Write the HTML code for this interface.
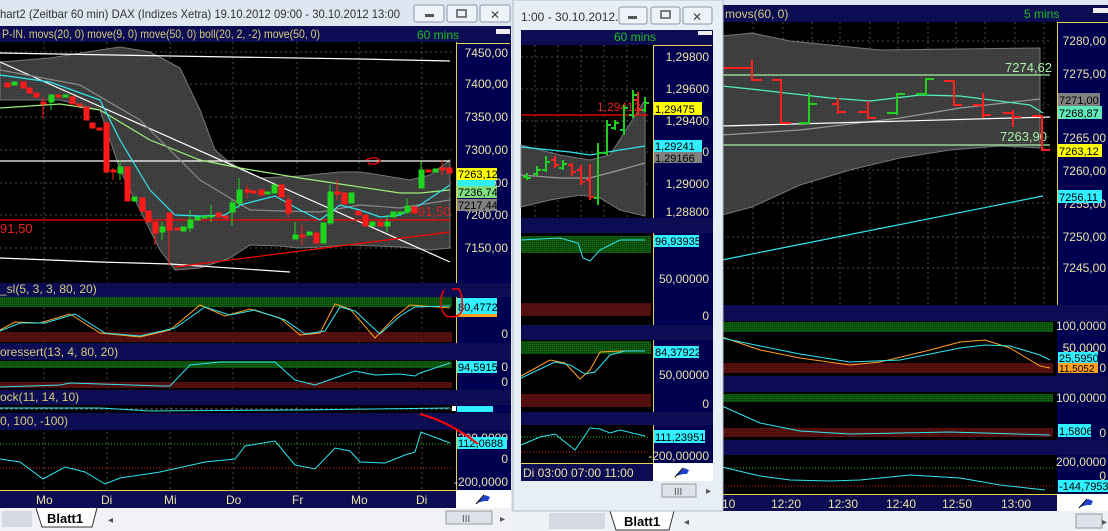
<!DOCTYPE html>
<html><head><meta charset="utf-8"><style>
html,body{margin:0;padding:0;background:#c8d4e4;overflow:hidden}
svg{display:block}
text{font-family:"Liberation Sans",sans-serif}
.ax{fill:#ece2a4;font-size:12px;text-anchor:end}
.hd{fill:#d6cc7a;font-size:12px}
.g{stroke:#4a4a4a;stroke-width:1;stroke-dasharray:2 3}
.tm{fill:#ece2a4;font-size:12px}
.tg{font-size:11px;fill:#000}
</style></head><body>
<svg width="1108" height="531" viewBox="0 0 1108 531" xmlns="http://www.w3.org/2000/svg">
<defs>
<pattern id="gr" width="2" height="2" patternUnits="userSpaceOnUse"><rect width="2" height="2" fill="#0a4a0a"/><rect width="1" height="1" fill="#147014"/></pattern>
<pattern id="rd" width="2" height="2" patternUnits="userSpaceOnUse"><rect width="2" height="2" fill="#4a0c0c"/><rect width="1" height="1" fill="#6a1414"/></pattern>
<pattern id="gy" width="2" height="2" patternUnits="userSpaceOnUse"><rect width="2" height="2" fill="#3a3a3a"/><rect width="1" height="1" fill="#4a4a4a"/></pattern>
<pattern id="nv" width="2" height="2" patternUnits="userSpaceOnUse"><rect width="2" height="2" fill="#0a0a50"/><rect width="1" height="1" fill="#14145e"/></pattern>
</defs>

<!-- ================= LEFT WINDOW ================= -->
<rect x="0" y="0" width="516" height="531" fill="#dfe7f2"/>
<rect x="0" y="0" width="516" height="25" fill="#dde6f1"/>
<text x="0" y="18" font-size="12" fill="#333" textLength="400" lengthAdjust="spacingAndGlyphs">hart2 (Zeitbar 60 min)  DAX (Indizes Xetra) 19.10.2012 09:00 - 30.10.2012 13:00</text>
<g fill="#eef3f9" stroke="#8a97a8"><rect x="414" y="5" width="30" height="17" rx="2"/><rect x="447" y="5" width="30" height="17" rx="2"/><rect x="480" y="5" width="30" height="17" rx="2"/></g>
<rect x="425" y="14" width="9" height="3" fill="#555"/>
<rect x="457" y="10" width="9" height="7" fill="none" stroke="#555" stroke-width="1.5"/>
<text x="495" y="19" font-size="12" fill="#444" text-anchor="middle">✕</text>

<rect x="0" y="26" width="511" height="464" fill="#000"/>
<rect x="0" y="26" width="511" height="16" fill="url(#nv)"/>
<text x="2" y="38" class="hd" textLength="318" lengthAdjust="spacingAndGlyphs">P-IN. movs(20, 0) move(9, 0) move(50, 0) boll(20, 2, -2) move(50, 0)</text>
<text x="417" y="39" font-size="12" fill="#20c020">60 mins</text>
<rect x="496" y="29" width="14" height="5" fill="#eee"/>
<rect x="456" y="42" width="55" height="241" fill="#000050"/>
<line x1="456.5" y1="42" x2="456.5" y2="283" stroke="#e8d050"/><line x1="456" y1="43.5" x2="510" y2="43.5" stroke="#e8d050"/>
<g class="ax"><text x="508" y="57">7450,00</text><text x="508" y="88">7400,00</text><text x="508" y="121">7350,00</text><text x="508" y="154">7300,00</text><text x="508" y="187">7250,00</text><text x="508" y="219">7200,00</text><text x="508" y="252">7150,00</text></g>
<g class="g"><line x1="44" y1="42" x2="44" y2="490"/><line x1="107" y1="42" x2="107" y2="490"/><line x1="170" y1="42" x2="170" y2="490"/><line x1="233" y1="42" x2="233" y2="490"/><line x1="297" y1="42" x2="297" y2="490"/><line x1="359" y1="42" x2="359" y2="490"/><line x1="422" y1="42" x2="422" y2="490"/>
<line x1="0" y1="52" x2="452" y2="52"/><line x1="0" y1="84" x2="452" y2="84"/><line x1="0" y1="117" x2="452" y2="117"/><line x1="0" y1="150" x2="452" y2="150"/><line x1="0" y1="183" x2="452" y2="183"/><line x1="0" y1="215" x2="452" y2="215"/><line x1="0" y1="248" x2="452" y2="248"/></g>
<polygon fill="url(#gy)" stroke="#777" points="0,62 50,58 100,50 120,47 150,52 180,68 200,110 215,150 230,163 260,178 300,176 340,172 360,172 380,175 410,180 430,175 450,160 450,248 430,250 400,247 350,245 320,247 300,248 280,246 250,245 230,258 200,268 175,270 160,250 140,210 120,170 100,110 60,100 0,100"/>
<g fill="none" stroke-width="1.2">
<polyline stroke="#fff" points="0,53 170,56 360,59 450,61"/>
<line x1="0" y1="161" x2="450" y2="161" stroke="#fff"/>
<polyline stroke="#fff" points="0,62 450,262"/>
<polyline stroke="#fff" points="0,258 100,262 170,264 290,272"/>
<line x1="0" y1="220" x2="450" y2="220" stroke="#f00"/>
<polyline stroke="#f00" points="175,267 450,232"/>
<polyline stroke="#9ef07a" points="0,108 60,104 100,110 150,140 200,160 240,168 300,178 340,184 400,193 420,193 450,190"/>
<polyline stroke="#8a8a8a" points="0,70 80,85 140,120 200,180 250,210 320,212 360,205 400,208 450,200"/>
<polyline stroke="#2ee6f0" points="0,75 50,82 100,100 120,140 150,190 175,215 200,216 225,215 240,205 275,196 300,210 320,220 340,205 360,210 380,217 400,215 420,205 450,185"/>
</g>
<g stroke-width="1">
<g fill="#ff1a1a" stroke="#ff1a1a">
<rect x="5" y="83" width="5" height="4"/><rect x="21" y="82" width="5" height="6"/><rect x="27" y="88" width="5" height="5"/><rect x="34" y="93" width="5" height="4"/><line x1="43" y1="97" x2="43" y2="118"/><rect x="41" y="102" width="5" height="2"/><rect x="56" y="95" width="5" height="2"/><rect x="70" y="97" width="5" height="7"/><rect x="77" y="104" width="5" height="2"/><rect x="84" y="107" width="5" height="13"/><rect x="90" y="123" width="5" height="5"/><rect x="97" y="128" width="5" height="2"/><rect x="104" y="123" width="5" height="49"/><line x1="113" y1="168" x2="113" y2="180"/><rect x="111" y="170" width="5" height="2"/><rect x="125" y="167" width="5" height="34"/><rect x="140" y="198" width="5" height="13"/><rect x="146" y="211" width="5" height="11"/><line x1="155" y1="222" x2="155" y2="245"/><rect x="153" y="222" width="5" height="11"/><line x1="169" y1="213" x2="169" y2="266"/><rect x="167" y="213" width="5" height="17"/><rect x="175" y="228" width="5" height="2"/><rect x="216" y="213" width="5" height="4"/><rect x="223" y="216" width="5" height="2"/><rect x="245" y="190" width="5" height="2"/><line x1="247" y1="185" x2="247" y2="198"/><rect x="251" y="191" width="5" height="2"/><rect x="259" y="190" width="5" height="5"/><rect x="279" y="185" width="5" height="12"/><rect x="286" y="200" width="5" height="13"/><line x1="288" y1="195" x2="288" y2="218"/><rect x="300" y="235" width="5" height="2"/><line x1="302" y1="225" x2="302" y2="245"/><rect x="314" y="233" width="5" height="10"/><rect x="335" y="192" width="5" height="2"/><line x1="337" y1="180" x2="337" y2="200"/><rect x="342" y="193" width="5" height="11"/><rect x="356" y="211" width="5" height="4"/><rect x="363" y="215" width="5" height="11"/><rect x="378" y="222" width="5" height="4"/><rect x="412" y="207" width="5" height="6"/><rect x="426" y="170" width="5" height="2"/><rect x="440" y="168" width="5" height="2"/><line x1="442" y1="160" x2="442" y2="175"/><rect x="447" y="168" width="5" height="5"/>
</g>
<g fill="#1ed61e" stroke="#1ed61e">
<rect x="12" y="82" width="5" height="3"/><rect x="49" y="95" width="5" height="7"/><line x1="51" y1="95" x2="51" y2="110"/><rect x="63" y="95" width="5" height="2"/><rect x="118" y="167" width="5" height="6"/><line x1="120" y1="160" x2="120" y2="180"/><rect x="132" y="197" width="5" height="4"/><rect x="160" y="227" width="5" height="5"/><line x1="162" y1="222" x2="162" y2="240"/><rect x="181" y="227" width="5" height="4"/><rect x="188" y="220" width="5" height="8"/><line x1="190" y1="210" x2="190" y2="232"/><rect x="195" y="217" width="5" height="3"/><rect x="202" y="216" width="5" height="2"/><rect x="209" y="216" width="5" height="1"/><line x1="211" y1="205" x2="211" y2="222"/><rect x="230" y="203" width="5" height="9"/><line x1="232" y1="200" x2="232" y2="226"/><rect x="237" y="190" width="5" height="13"/><line x1="239" y1="178" x2="239" y2="208"/><rect x="265" y="192" width="5" height="2"/><rect x="272" y="185" width="5" height="8"/><line x1="295" y1="222" x2="295" y2="239"/><rect x="293" y="235" width="5" height="4"/><rect x="307" y="232" width="5" height="3"/><rect x="321" y="223" width="5" height="20"/><rect x="328" y="192" width="5" height="31"/><line x1="330" y1="185" x2="330" y2="225"/><rect x="349" y="193" width="5" height="10"/><rect x="370" y="222" width="5" height="4"/><rect x="385" y="222" width="5" height="4"/><line x1="387" y1="215" x2="387" y2="232"/><rect x="391" y="212" width="5" height="5"/><rect x="398" y="212" width="5" height="2"/><rect x="405" y="206" width="5" height="6"/><line x1="407" y1="198" x2="407" y2="214"/><rect x="419" y="170" width="5" height="18"/><line x1="421" y1="161" x2="421" y2="188"/><rect x="433" y="169" width="5" height="3"/>
</g></g>
<path d="M366,160 q10,-5 14,1 q-5,5 -12,2" fill="none" stroke="#f00" stroke-width="1.3"/>
<text x="0" y="233" font-size="13" fill="#f02020">91,50</text>
<text x="418" y="216" font-size="13" fill="#d02020">91,50</text>
<rect x="457" y="168" width="40" height="12" fill="#ffff00"/><text x="458" y="178" class="tg">7263,12</text>
<rect x="457" y="180" width="38" height="6" fill="#30f0ff"/>
<rect x="457" y="186" width="40" height="12" fill="#80e080"/><text x="458" y="196" class="tg">7236,74</text>
<rect x="457" y="199" width="40" height="12" fill="#808080"/><text x="458" y="209" class="tg">7217,44</text>

<rect x="0" y="283" width="511" height="14" fill="url(#nv)"/><text x="0" y="293" class="hd">_sl(5, 3, 3, 80, 20)</text>
<rect x="0" y="297" width="452" height="10" fill="url(#gr)"/><rect x="0" y="332" width="452" height="10" fill="url(#rd)"/>
<rect x="456" y="297" width="55" height="46" fill="#000050"/><line x1="456.5" y1="297" x2="456.5" y2="343" stroke="#e8d050"/>
<polyline fill="none" stroke="#ffa020" points="0,330 15,322 40,323 70,314 100,333 140,337 170,330 200,305 225,316 250,309 280,318 300,335 320,333 335,304 350,309 375,338 395,317 410,305 450,308"/>
<polyline fill="none" stroke="#2ee6f0" points="0,331 20,323 45,323 75,314 105,333 140,336 175,328 205,307 230,315 255,310 285,320 305,334 325,331 340,307 355,311 380,334 400,316 415,307 450,306"/>
<rect x="457" y="298" width="40" height="16" fill="#30f0ff"/><rect x="457" y="314" width="40" height="3" fill="#ffa020"/><text x="458" y="311" class="tg">80,4772</text>
<text x="508" y="338" class="ax">0</text>
<path d="M444,290 q-8,15 2,26 q12,3 16,-5 q1,-16 -3,-22 l-7,0" fill="none" stroke="#f00" stroke-width="1.5"/>

<rect x="0" y="343" width="511" height="17" fill="url(#nv)"/><text x="0" y="356" class="hd">oressert(13, 4, 80, 20)</text>
<rect x="0" y="361" width="452" height="7" fill="url(#gr)"/><rect x="0" y="382" width="452" height="6" fill="url(#rd)"/>
<rect x="456" y="360" width="55" height="30" fill="#000050"/><line x1="456.5" y1="360" x2="456.5" y2="390" stroke="#e8d050"/>
<polyline fill="none" stroke="#2ee6f0" points="0,387 60,385 70,383 160,386 170,386 190,365 220,362 275,362 295,380 315,385 355,371 375,375 400,374 415,376 420,373 450,363"/>
<rect x="457" y="361" width="40" height="12" fill="#30f0ff"/><text x="458" y="371" class="tg">94,5915</text><text x="508" y="371" class="ax">0</text><text x="508" y="386" class="ax">0</text>

<rect x="0" y="390" width="511" height="15" fill="url(#nv)"/><text x="0" y="401" class="hd">ock(11, 14, 10)</text>
<rect x="456" y="405" width="55" height="8" fill="#000050"/>
<line x1="0" y1="409" x2="452" y2="409" stroke="#666" stroke-dasharray="3 2"/>
<polyline fill="none" stroke="#2ee6f0" points="0,408 100,408 150,411 300,410 450,408"/>
<rect x="452" y="406" width="4" height="5" fill="#fff"/><rect x="457" y="406" width="36" height="6" fill="#30f0ff"/>

<rect x="0" y="413" width="511" height="17" fill="url(#nv)"/><text x="0" y="425" class="hd">0, 100, -100)</text>
<rect x="456" y="430" width="55" height="60" fill="#000050"/><line x1="456.5" y1="430" x2="456.5" y2="490" stroke="#e8d050"/>
<line x1="0" y1="444" x2="452" y2="444" stroke="#20d020" stroke-dasharray="1 2"/><line x1="0" y1="468" x2="452" y2="468" stroke="#e02020" stroke-dasharray="1 2"/>
<polyline fill="none" stroke="#2ee6f0" points="0,459 20,462 43,479 65,467 85,472 105,484 120,478 160,472 205,462 235,459 245,446 275,441 295,465 315,469 335,448 350,451 360,462 385,463 405,455 415,452 421,432 450,443"/>
<text x="508" y="442" class="ax">200,0000</text>
<rect x="457" y="437" width="50" height="12" fill="#30f0ff"/><text x="458" y="447" class="tg">112,0688</text>
<text x="508" y="463" class="ax">0</text><text x="508" y="486" class="ax">-200,0000</text>
<path d="M420,414 q30,8 58,30" fill="none" stroke="#f00" stroke-width="2"/>
<rect x="0" y="490" width="456" height="18" fill="url(#nv)"/><line x1="0" y1="490.5" x2="456" y2="490.5" stroke="#e8d050"/>
<g class="tm"><text x="36" y="504">Mo</text><text x="101" y="504">Di</text><text x="164" y="504">Mi</text><text x="226" y="504">Do</text><text x="292" y="504">Fr</text><text x="351" y="504">Mo</text><text x="416" y="504">Di</text></g>
<rect x="456" y="490" width="55" height="18" fill="#fff"/>
<path d="M477,503 l8,-8 l5,2 l-2,4 l-4,0 z" fill="#2040d0"/><line x1="476" y1="504" x2="484" y2="495" stroke="#000"/>
<rect x="0" y="508" width="511" height="23" fill="#f0f2f5"/>
<rect x="2" y="511" width="30" height="16" fill="#d6dbe3"/>
<path d="M36,508 l6,19 h50 l5,-19" fill="#fff" stroke="#333"/>
<text x="47" y="523" font-size="13" font-weight="bold" fill="#000">Blatt1</text>
<text x="108" y="523" font-size="10" fill="#555">◂</text>
<rect x="446" y="511" width="46" height="13" fill="#dde2ea" stroke="#999"/><text x="462" y="522" font-size="10" fill="#555">III</text>
<text x="500" y="522" font-size="10" fill="#555">▸</text>

<!-- ================= RIGHT WINDOW ================= -->
<rect x="722" y="0" width="386" height="6" fill="#dfe7f2"/>
<rect x="722" y="5" width="386" height="17" fill="url(#nv)"/>
<text x="725" y="18" class="hd">movs(60, 0)</text><text x="1024" y="18" font-size="12" fill="#20c020">5 mins</text>
<rect x="1093" y="8" width="15" height="5" fill="#eee"/>
<rect x="722" y="22" width="386" height="283" fill="#000"/>
<rect x="1057" y="22" width="51" height="283" fill="#000050"/><line x1="1057.5" y1="22" x2="1057.5" y2="305" stroke="#e8d050"/><line x1="1057" y1="22.5" x2="1108" y2="22.5" stroke="#e8d050"/>
<g class="g"><line x1="753" y1="22" x2="753" y2="494"/><line x1="783" y1="22" x2="783" y2="494"/><line x1="812" y1="22" x2="812" y2="494"/><line x1="840" y1="22" x2="840" y2="494"/><line x1="870" y1="22" x2="870" y2="494"/><line x1="898" y1="22" x2="898" y2="494"/><line x1="928" y1="22" x2="928" y2="494"/><line x1="956" y1="22" x2="956" y2="494"/><line x1="985" y1="22" x2="985" y2="494"/><line x1="1015" y1="22" x2="1015" y2="494"/><line x1="1044" y1="22" x2="1044" y2="494"/>
<line x1="722" y1="41" x2="1052" y2="41"/><line x1="722" y1="73" x2="1052" y2="73"/><line x1="722" y1="105" x2="1052" y2="105"/><line x1="722" y1="137" x2="1052" y2="137"/><line x1="722" y1="170" x2="1052" y2="170"/><line x1="722" y1="203" x2="1052" y2="203"/><line x1="722" y1="237" x2="1052" y2="237"/><line x1="722" y1="268" x2="1052" y2="268"/></g>
<polygon fill="url(#gy)" stroke="#777" points="722,36 752,33 790,41 880,50 1040,48 1040,148 1000,146 950,150 900,158 850,170 800,185 752,207 722,215"/>
<g fill="none" stroke-width="1.2">
<line x1="722" y1="75" x2="1050" y2="75" stroke="#a8f0a8"/><line x1="722" y1="145" x2="1050" y2="145" stroke="#a8f0a8"/>
<polyline stroke="#999" points="722,135 800,130 900,118 960,108 1040,99"/>
<polyline stroke="#fff" points="722,126 1050,117"/>
<polyline stroke="#50f0c0" points="722,86 760,90 830,98 870,101 920,95 960,96 1030,105 1043,113"/>
<line x1="722" y1="260" x2="1043" y2="196" stroke="#2ee6f0"/>
</g>
<text x="1005" y="72" font-size="13" fill="#a8f0a8">7274,62</text><text x="1000" y="141" font-size="13" fill="#a8f0a8">7263,90</text>
<g stroke-width="2" fill="none">
<path stroke="#ff2020" d="M722,68h30M752,60v20h10M742,68h10 M772,80h9v43h10M781,80v43M832,104h6v8h8M838,98v16 M858,112h10v6h8M868,101v17 M944,81h10v24h8M954,80v25 M973,105h10v10h8M983,93v25 M1003,113h10v4h8M1013,110v17 M1032,116h10v34h8M1042,115v35"/>
<path stroke="#20d020" d="M799,123h10v-19h8M809,93v30 M887,113h10v-19h8M897,93v22 M916,94h10v-15h8M926,78v18"/>
</g>
<g class="ax"><text x="1106" y="45">7280,00</text><text x="1106" y="78">7275,00</text><text x="1106" y="142">7265,00</text><text x="1106" y="175">7260,00</text><text x="1106" y="208">7255,00</text><text x="1106" y="241">7250,00</text><text x="1106" y="272">7245,00</text></g>
<rect x="1058" y="93" width="42" height="13" fill="#808080"/><text x="1059" y="104" class="tg">7271,00</text>
<rect x="1058" y="106" width="44" height="13" fill="#60e8b8"/><text x="1059" y="117" class="tg">7268,87</text>
<rect x="1058" y="144" width="44" height="13" fill="#ffff00"/><text x="1059" y="155" class="tg">7263,12</text>
<rect x="1058" y="190" width="44" height="13" fill="#30f0ff"/><text x="1059" y="201" class="tg">7256,11</text>
<rect x="722" y="305" width="386" height="16" fill="url(#nv)"/>
<rect x="722" y="321" width="335" height="55" fill="#000"/><rect x="1057" y="321" width="51" height="55" fill="#000050"/>
<rect x="722" y="322" width="331" height="10" fill="url(#gr)"/><rect x="722" y="363" width="331" height="10" fill="url(#rd)"/>
<polyline fill="none" stroke="#ffa020" points="722,337 760,350 800,358 850,365 880,362 930,350 960,342 985,340 1010,348 1040,366 1050,368"/>
<polyline fill="none" stroke="#2ee6f0" points="722,338 760,346 800,354 850,362 900,360 960,348 985,345 1010,346 1040,355 1050,360"/>
<text x="1106" y="330" class="ax">100,0000</text><text x="1106" y="352" class="ax">50,0000</text><text x="1106" y="372" class="ax">0</text>
<rect x="1058" y="352" width="40" height="11" fill="#30f0ff"/><text x="1059" y="362" class="tg">25,5950</text>
<rect x="1058" y="363" width="40" height="10" fill="#ffa020"/><text x="1059" y="372" font-size="10" fill="#000">11,5052</text>
<rect x="722" y="376" width="386" height="16" fill="url(#nv)"/>
<rect x="722" y="392" width="335" height="48" fill="#000"/><rect x="1057" y="392" width="51" height="48" fill="#000050"/>
<rect x="722" y="394" width="331" height="8" fill="url(#gr)"/><rect x="722" y="428" width="331" height="9" fill="url(#rd)"/>
<polyline fill="none" stroke="#2ee6f0" points="722,406 760,423 800,431 850,434 900,433 950,432 1050,435"/>
<text x="1106" y="402" class="ax">100,0000</text><text x="1106" y="437" class="ax">0</text>
<rect x="1058" y="424" width="33" height="13" fill="#30f0ff"/><text x="1059" y="435" class="tg">1,5806</text>
<rect x="722" y="440" width="386" height="15" fill="url(#nv)"/>
<rect x="722" y="455" width="335" height="39" fill="#000"/><rect x="1057" y="455" width="51" height="39" fill="#000050"/>
<line x1="722" y1="468" x2="1053" y2="468" stroke="#20d020" stroke-dasharray="1 2"/><line x1="722" y1="486" x2="1053" y2="486" stroke="#e02020" stroke-dasharray="1 2"/>
<polyline fill="none" stroke="#2ee6f0" points="722,467 760,476 790,480 830,481 860,480 910,475 960,478 1000,485 1045,490"/>
<text x="1106" y="466" class="ax">200,0000</text><text x="1106" y="480" class="ax">0</text>
<rect x="1058" y="480" width="50" height="12" fill="#30f0ff"/><text x="1059" y="490" class="tg">-144,7953</text>
<rect x="722" y="494" width="335" height="17" fill="url(#nv)"/><line x1="722" y1="494.5" x2="1057" y2="494.5" stroke="#e8d050"/>
<g class="tm"><text x="722" y="508">10</text><text x="771" y="508">12:20</text><text x="828" y="508">12:30</text><text x="886" y="508">12:40</text><text x="942" y="508">12:50</text><text x="1001" y="508">13:00</text></g>
<rect x="1057" y="494" width="51" height="17" fill="#fff"/>
<path d="M1080,507 l8,-8 l5,2 l-2,4 l-4,0 z" fill="#2040d0"/><line x1="1079" y1="508" x2="1087" y2="499" stroke="#000"/>
<rect x="510" y="511" width="598" height="20" fill="#eef1f5"/>
<rect x="549" y="513" width="56" height="16" fill="#d6dbe3"/>
<path d="M610,511 l6,19 h53 l5,-19" fill="#fff" stroke="#333"/>
<text x="624" y="526" font-size="13" font-weight="bold" fill="#000">Blatt1</text>
<text x="684" y="525" font-size="10" fill="#555">◂</text>
<rect x="1076" y="514" width="26" height="14" fill="#dde2ea" stroke="#999"/>
<text x="1102" y="525" font-size="10" fill="#555">▸</text>

<!-- ================= MIDDLE WINDOW ================= -->
<rect x="513" y="0" width="210" height="511" fill="#e8eef6" stroke="#b0bccc"/>
<text x="521" y="21" font-size="12" fill="#333">1:00 - 30.10.2012...</text>
<g fill="#eef3f9" stroke="#8a97a8"><rect x="619" y="7" width="28" height="17" rx="2"/><rect x="651" y="7" width="29" height="17" rx="2"/><rect x="683" y="7" width="29" height="17" rx="2"/></g>
<rect x="628" y="16" width="9" height="3" fill="#555"/><rect x="661" y="11" width="9" height="7" fill="none" stroke="#555" stroke-width="1.5"/>
<text x="697" y="21" font-size="12" fill="#444" text-anchor="middle">✕</text>
<rect x="521" y="30" width="192" height="15" fill="url(#nv)"/>
<text x="614" y="41" font-size="12" fill="#20c020">60 mins</text><rect x="698" y="31" width="14" height="4" fill="#eee"/>
<rect x="521" y="45" width="192" height="173" fill="#000"/>
<rect x="653" y="45" width="60" height="173" fill="#000050"/><line x1="653.5" y1="45" x2="653.5" y2="218" stroke="#e8d050"/><line x1="653" y1="45.5" x2="712" y2="45.5" stroke="#e8d050"/>
<g class="g"><line x1="535" y1="45" x2="535" y2="462"/><line x1="558" y1="45" x2="558" y2="462"/><line x1="581" y1="45" x2="581" y2="462"/><line x1="604" y1="45" x2="604" y2="462"/><line x1="627" y1="45" x2="627" y2="462"/><line x1="521" y1="57" x2="650" y2="57"/><line x1="521" y1="89" x2="650" y2="89"/><line x1="521" y1="121" x2="650" y2="121"/><line x1="521" y1="152" x2="650" y2="152"/><line x1="521" y1="184" x2="650" y2="184"/></g>
<polygon fill="url(#gy)" stroke="#777" points="521,145 560,155 590,160 610,155 645,100 645,216 620,210 600,198 580,195 550,200 521,207"/>
<g fill="none" stroke-width="1.2">
<polyline stroke="#999" points="521,175 560,178 590,178 620,170 645,163"/>
<polyline stroke="#2ee6f0" points="521,147 570,152 590,155 620,150 645,146"/>
<line x1="521" y1="115" x2="648" y2="115" stroke="#f00"/>
</g>
<text x="597" y="111" font-size="12" fill="#e02020">1,29412</text>
<g stroke-width="2" fill="none">
<path stroke="#20d020" d="M527,173v7M523,177h4M527,178h4 M537,166v10M533,174h4M537,170h4 M546,156v16M542,170h4M546,162h4 M563,160v10M559,168h4M563,164h4 M598,143v62M594,198h4M598,153h4 M607,120v35M603,153h4M607,125h4 M615,120v10M611,128h4M615,123h4 M624,105v30M620,130h4M624,108h4 M633,90v28M629,115h4M633,95h4 M645,97v15M641,110h4M645,103h4"/>
<path stroke="#ff2020" d="M555,156v12M551,160h4M555,165h4 M572,163v13M568,165h4M572,172h4 M581,165v20M577,170h4M581,182h4 M590,164v36M586,180h4M590,197h4 M638,92v23M634,100h4M638,110h4"/>
</g>
<g class="ax"><text x="709" y="61">1,29800</text><text x="709" y="93">1,29600</text><text x="709" y="125">1,29400</text><text x="709" y="156">1,29200</text><text x="709" y="188">1,29000</text><text x="709" y="216">1,28800</text></g>
<rect x="654" y="102" width="48" height="13" fill="#ffff00"/><text x="655" y="113" class="tg">1,29475</text>
<rect x="654" y="140" width="48" height="12" fill="#30f0ff"/><text x="655" y="150" class="tg">1,29241</text>
<rect x="654" y="152" width="48" height="11" fill="#808080"/><text x="655" y="162" class="tg">1,29166</text>
<rect x="521" y="218" width="192" height="15" fill="url(#nv)"/>
<rect x="521" y="233" width="192" height="92" fill="#000"/><rect x="653" y="233" width="60" height="92" fill="#000050"/><line x1="653.5" y1="233" x2="653.5" y2="325" stroke="#e8d050"/>
<rect x="521" y="236" width="130" height="17" fill="url(#gr)"/><rect x="521" y="303" width="130" height="13" fill="url(#rd)"/>
<polyline fill="none" stroke="#2ee6f0" points="521,240 560,238 578,243 583,258 590,261 600,250 620,240 645,240"/>
<rect x="654" y="235" width="45" height="12" fill="#30f0ff"/><text x="655" y="245" class="tg">96,93935</text>
<text x="709" y="283" class="ax">50,00000</text><text x="709" y="320" class="ax">0</text>
<rect x="521" y="325" width="192" height="15" fill="url(#nv)"/>
<rect x="521" y="340" width="192" height="72" fill="#000"/><rect x="653" y="340" width="60" height="72" fill="#000050"/><line x1="653.5" y1="340" x2="653.5" y2="412" stroke="#e8d050"/>
<rect x="521" y="341" width="130" height="13" fill="url(#gr)"/><rect x="521" y="394" width="130" height="13" fill="url(#rd)"/>
<polyline fill="none" stroke="#ffa020" points="521,376 550,360 565,363 580,379 590,370 600,352 620,351 645,351"/>
<polyline fill="none" stroke="#2ee6f0" points="521,378 555,362 570,365 585,374 595,372 610,355 625,351 645,351"/>
<rect x="654" y="346" width="45" height="12" fill="#30f0ff"/><text x="655" y="356" class="tg">84,37922</text>
<text x="709" y="379" class="ax">50,00000</text><text x="709" y="408" class="ax">0</text>
<rect x="521" y="412" width="192" height="13" fill="url(#nv)"/>
<rect x="521" y="425" width="192" height="38" fill="#000"/><rect x="653" y="425" width="60" height="38" fill="#000050"/><line x1="653.5" y1="425" x2="653.5" y2="463" stroke="#e8d050"/>
<line x1="521" y1="437" x2="650" y2="437" stroke="#20d020" stroke-dasharray="1 2"/><line x1="521" y1="452" x2="650" y2="452" stroke="#e02020" stroke-dasharray="1 2"/>
<polyline fill="none" stroke="#2ee6f0" points="521,445 540,437 555,434 575,450 590,428 600,429 610,433 620,430 645,436"/>
<rect x="654" y="430" width="51" height="13" fill="#30f0ff"/><text x="655" y="441" class="tg">111,23951</text>
<text x="709" y="460" class="ax">-200,00000</text>
<rect x="521" y="463" width="132" height="18" fill="url(#nv)"/><line x1="521" y1="463.5" x2="653" y2="463.5" stroke="#e8d050"/>
<text x="523" y="477" class="tm">Di  03:00  07:00  11:00</text>
<rect x="653" y="463" width="60" height="18" fill="#fff"/>
<path d="M676,476 l8,-8 l5,2 l-2,4 l-4,0 z" fill="#2040d0"/><line x1="675" y1="477" x2="683" y2="468" stroke="#000"/>
<rect x="662" y="484" width="34" height="13" fill="#dde2ea" stroke="#999"/><text x="674" y="495" font-size="10" fill="#555">III</text>
<text x="706" y="494" font-size="10" fill="#555">▸</text>
</svg>
</body></html>
